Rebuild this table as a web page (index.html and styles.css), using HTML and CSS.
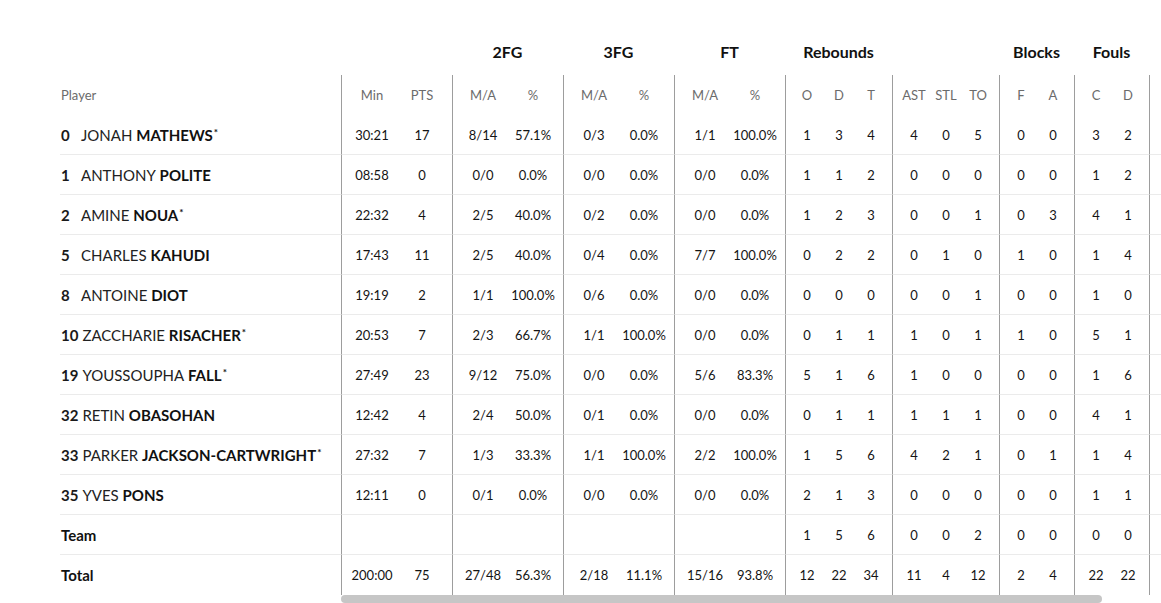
FILE: index.html
```html
<!DOCTYPE html>
<html lang="en">
<head>
<meta charset="utf-8">
<title>Box score</title>
<link rel="stylesheet" href="styles.css">
</head>
<body>
<div class="boxscore">
  <div class="players">
    <div class="phead"></div>
    <div class="psub">Player</div>
    <div class="prow"><span class="num">0</span><span class="first">JONAH</span>&nbsp;<span class="last">MATHEWS</span><span class="star">*</span></div>
    <div class="prow"><span class="num">1</span><span class="first">ANTHONY</span>&nbsp;<span class="last">POLITE</span></div>
    <div class="prow"><span class="num">2</span><span class="first">AMINE</span>&nbsp;<span class="last">NOUA</span><span class="star">*</span></div>
    <div class="prow"><span class="num">5</span><span class="first">CHARLES</span>&nbsp;<span class="last">KAHUDI</span></div>
    <div class="prow"><span class="num">8</span><span class="first">ANTOINE</span>&nbsp;<span class="last">DIOT</span></div>
    <div class="prow"><span class="num">10</span><span class="first">ZACCHARIE</span>&nbsp;<span class="last">RISACHER</span><span class="star">*</span></div>
    <div class="prow"><span class="num">19</span><span class="first">YOUSSOUPHA</span>&nbsp;<span class="last">FALL</span><span class="star">*</span></div>
    <div class="prow"><span class="num">32</span><span class="first">RETIN</span>&nbsp;<span class="last">OBASOHAN</span></div>
    <div class="prow"><span class="num">33</span><span class="first">PARKER</span>&nbsp;<span class="last">JACKSON-CARTWRIGHT</span><span class="star">*</span></div>
    <div class="prow"><span class="num">35</span><span class="first">YVES</span>&nbsp;<span class="last">PONS</span></div>
    <div class="prow total"><span class="label">Team</span></div>
    <div class="prow total final"><span class="label">Total</span></div>
  </div>

  <div class="stats">
    <div class="stats-inner">
      <div class="grow ghead">
        <div class="span2"></div>
        <div class="span2">2FG</div>
        <div class="span2">3FG</div>
        <div class="span2">FT</div>
        <div class="span3">Rebounds</div>
        <div class="span3"></div>
        <div class="span2">Blocks</div>
        <div class="span2">Fouls</div>
        <div class="span2"></div>
      </div>
      <div class="grow gsub">
        <div class="g">Min</div><div class="e">PTS</div>
        <div class="g">M/A</div><div class="e">%</div>
        <div class="g">M/A</div><div class="e">%</div>
        <div class="g">M/A</div><div class="e">%</div>
        <div class="g">O</div><div>D</div><div class="e">T</div>
        <div class="g">AST</div><div>STL</div><div class="e">TO</div>
        <div class="g">F</div><div class="e">A</div>
        <div class="g">C</div><div class="e">D</div>
        <div class="g"></div><div class="e"></div>
      </div>

      <div class="grow srow">
        <div class="g">30:21</div><div class="e">17</div>
        <div class="g">8/14</div><div class="e">57.1%</div>
        <div class="g">0/3</div><div class="e">0.0%</div>
        <div class="g">1/1</div><div class="e">100.0%</div>
        <div class="g">1</div><div>3</div><div class="e">4</div>
        <div class="g">4</div><div>0</div><div class="e">5</div>
        <div class="g">0</div><div class="e">0</div>
        <div class="g">3</div><div class="e">2</div>
        <div class="g"></div><div class="e"></div>
      </div>
      <div class="grow srow">
        <div class="g">08:58</div><div class="e">0</div>
        <div class="g">0/0</div><div class="e">0.0%</div>
        <div class="g">0/0</div><div class="e">0.0%</div>
        <div class="g">0/0</div><div class="e">0.0%</div>
        <div class="g">1</div><div>1</div><div class="e">2</div>
        <div class="g">0</div><div>0</div><div class="e">0</div>
        <div class="g">0</div><div class="e">0</div>
        <div class="g">1</div><div class="e">2</div>
        <div class="g"></div><div class="e"></div>
      </div>
      <div class="grow srow">
        <div class="g">22:32</div><div class="e">4</div>
        <div class="g">2/5</div><div class="e">40.0%</div>
        <div class="g">0/2</div><div class="e">0.0%</div>
        <div class="g">0/0</div><div class="e">0.0%</div>
        <div class="g">1</div><div>2</div><div class="e">3</div>
        <div class="g">0</div><div>0</div><div class="e">1</div>
        <div class="g">0</div><div class="e">3</div>
        <div class="g">4</div><div class="e">1</div>
        <div class="g"></div><div class="e"></div>
      </div>
      <div class="grow srow">
        <div class="g">17:43</div><div class="e">11</div>
        <div class="g">2/5</div><div class="e">40.0%</div>
        <div class="g">0/4</div><div class="e">0.0%</div>
        <div class="g">7/7</div><div class="e">100.0%</div>
        <div class="g">0</div><div>2</div><div class="e">2</div>
        <div class="g">0</div><div>1</div><div class="e">0</div>
        <div class="g">1</div><div class="e">0</div>
        <div class="g">1</div><div class="e">4</div>
        <div class="g"></div><div class="e"></div>
      </div>
      <div class="grow srow">
        <div class="g">19:19</div><div class="e">2</div>
        <div class="g">1/1</div><div class="e">100.0%</div>
        <div class="g">0/6</div><div class="e">0.0%</div>
        <div class="g">0/0</div><div class="e">0.0%</div>
        <div class="g">0</div><div>0</div><div class="e">0</div>
        <div class="g">0</div><div>0</div><div class="e">1</div>
        <div class="g">0</div><div class="e">0</div>
        <div class="g">1</div><div class="e">0</div>
        <div class="g"></div><div class="e"></div>
      </div>
      <div class="grow srow">
        <div class="g">20:53</div><div class="e">7</div>
        <div class="g">2/3</div><div class="e">66.7%</div>
        <div class="g">1/1</div><div class="e">100.0%</div>
        <div class="g">0/0</div><div class="e">0.0%</div>
        <div class="g">0</div><div>1</div><div class="e">1</div>
        <div class="g">1</div><div>0</div><div class="e">1</div>
        <div class="g">1</div><div class="e">0</div>
        <div class="g">5</div><div class="e">1</div>
        <div class="g"></div><div class="e"></div>
      </div>
      <div class="grow srow">
        <div class="g">27:49</div><div class="e">23</div>
        <div class="g">9/12</div><div class="e">75.0%</div>
        <div class="g">0/0</div><div class="e">0.0%</div>
        <div class="g">5/6</div><div class="e">83.3%</div>
        <div class="g">5</div><div>1</div><div class="e">6</div>
        <div class="g">1</div><div>0</div><div class="e">0</div>
        <div class="g">0</div><div class="e">0</div>
        <div class="g">1</div><div class="e">6</div>
        <div class="g"></div><div class="e"></div>
      </div>
      <div class="grow srow">
        <div class="g">12:42</div><div class="e">4</div>
        <div class="g">2/4</div><div class="e">50.0%</div>
        <div class="g">0/1</div><div class="e">0.0%</div>
        <div class="g">0/0</div><div class="e">0.0%</div>
        <div class="g">0</div><div>1</div><div class="e">1</div>
        <div class="g">1</div><div>1</div><div class="e">1</div>
        <div class="g">0</div><div class="e">0</div>
        <div class="g">4</div><div class="e">1</div>
        <div class="g"></div><div class="e"></div>
      </div>
      <div class="grow srow">
        <div class="g">27:32</div><div class="e">7</div>
        <div class="g">1/3</div><div class="e">33.3%</div>
        <div class="g">1/1</div><div class="e">100.0%</div>
        <div class="g">2/2</div><div class="e">100.0%</div>
        <div class="g">1</div><div>5</div><div class="e">6</div>
        <div class="g">4</div><div>2</div><div class="e">1</div>
        <div class="g">0</div><div class="e">1</div>
        <div class="g">1</div><div class="e">4</div>
        <div class="g"></div><div class="e"></div>
      </div>
      <div class="grow srow">
        <div class="g">12:11</div><div class="e">0</div>
        <div class="g">0/1</div><div class="e">0.0%</div>
        <div class="g">0/0</div><div class="e">0.0%</div>
        <div class="g">0/0</div><div class="e">0.0%</div>
        <div class="g">2</div><div>1</div><div class="e">3</div>
        <div class="g">0</div><div>0</div><div class="e">0</div>
        <div class="g">0</div><div class="e">0</div>
        <div class="g">1</div><div class="e">1</div>
        <div class="g"></div><div class="e"></div>
      </div>
      <div class="grow srow">
        <div class="g"></div><div class="e"></div>
        <div class="g"></div><div class="e"></div>
        <div class="g"></div><div class="e"></div>
        <div class="g"></div><div class="e"></div>
        <div class="g">1</div><div>5</div><div class="e">6</div>
        <div class="g">0</div><div>0</div><div class="e">2</div>
        <div class="g">0</div><div class="e">0</div>
        <div class="g">0</div><div class="e">0</div>
        <div class="g"></div><div class="e"></div>
      </div>
      <div class="grow srow final">
        <div class="g">200:00</div><div class="e">75</div>
        <div class="g">27/48</div><div class="e">56.3%</div>
        <div class="g">2/18</div><div class="e">11.1%</div>
        <div class="g">15/16</div><div class="e">93.8%</div>
        <div class="g">12</div><div>22</div><div class="e">34</div>
        <div class="g">11</div><div>4</div><div class="e">12</div>
        <div class="g">2</div><div class="e">4</div>
        <div class="g">22</div><div class="e">22</div>
        <div class="g"></div><div class="e"></div>
      </div>
    </div>
    <div class="hscroll"><div class="hscroll-thumb"></div></div>
  </div>
</div>
</body>
</html>
```

FILE: styles.css
```css
html, body {
  margin: 0;
  background: #ffffff;
  overflow: hidden;
}

body {
  font-family: Lato, "Open Sans", "DejaVu Sans", sans-serif;
  color: #141414;
}

.boxscore {
  display: flex;
  padding: 32px 0 0 60px;
}

/* ---------- player column ---------- */
.players {
  flex: none;
  width: 281px;
}

.phead {
  height: 43px;
}

.psub {
  height: 39px;
  display: flex;
  align-items: center;
  padding-left: 1px;
  padding-bottom: 1px;
  font-size: 13px;
  color: #6b6b6b;
}

.prow {
  box-sizing: border-box;
  height: 40px;
  display: flex;
  align-items: center;
  padding-left: 1px;
  border-bottom: 1px solid #ebebeb;
  font-size: 15px;
  white-space: nowrap;
}

.prow.final {
  border-bottom: none;
}

.num {
  min-width: 16px;
  margin-right: 4px;
  font-weight: 700;
  color: #1a1a1a;
}

.first {
  font-weight: 400;
  color: #222222;
}

.last {
  font-weight: 700;
  color: #111111;
}

.star {
  font-size: 10px;
  font-weight: 700;
  align-self: flex-start;
  margin-top: 11px;
  margin-left: 1px;
}

.label {
  font-weight: 700;
  color: #111111;
}

/* ---------- stats scroller ---------- */
.stats {
  flex: 1;
  min-width: 0;
  overflow: hidden;
}

.stats-inner {
  width: 884px;
}

.hscroll {
  height: 8px;
}

.hscroll-thumb {
  width: 761px;
  height: 8px;
  border-radius: 4px;
  background: #c6c6c6;
}

.grow {
  display: grid;
  grid-template-columns:
    56px 55px
    56px 55px
    56px 55px
    56px 55px
    38px 32px 37px
    38px 32px 37px
    38px 37px
    38px 37px
    38px 38px;
}

.grow > div {
  box-sizing: border-box;
  display: flex;
  align-items: center;
  justify-content: center;
  white-space: nowrap;
}

.ghead {
  height: 43px;
}

.ghead > div {
  align-items: flex-start;
  padding-top: 10px;
  font-size: 16px;
  line-height: 20px;
  font-weight: 700;
  color: #111111;
}

.span2 { grid-column: span 2; }
.span3 { grid-column: span 3; }

.gsub > div {
  height: 40px;
  padding-bottom: 1px;
  font-size: 13px;
  color: #6b6b6b;
}

.srow > div {
  height: 40px;
  font-size: 13px;
  color: #141414;
  border-bottom: 1px solid #ebebeb;
}

.srow.final > div {
  border-bottom: none;
}

.grow > .g {
  border-left: 1px solid #9d9d9d;
  padding-left: 5px;
}

.grow > .e {
  padding-right: 5px;
}
```
